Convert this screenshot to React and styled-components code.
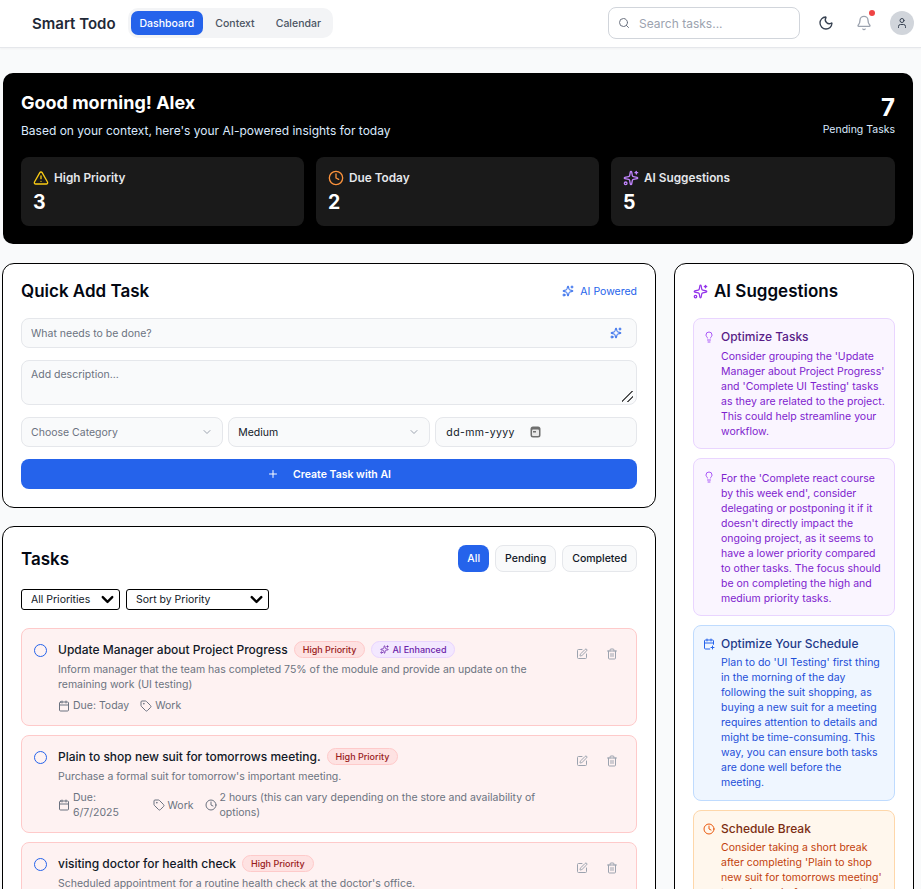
import React from 'react'
import styled, { createGlobalStyle } from 'styled-components'
import {
  Search, Moon, Bell, User, TriangleAlert, Clock, Sparkles, Plus, ChevronDown,
  Calendar, Tag, SquarePen, Trash2, Lightbulb, CalendarPlus,
} from 'lucide-react'

const GlobalStyle = createGlobalStyle`
  html, body { margin: 0; height: 100%; overflow: hidden; }
  body { background: #f9fafb; font-family: Inter, "Liberation Sans", sans-serif; color: #111827; }
  * { box-sizing: border-box; }
`

const Page = styled.div`
  height: 100vh;
  overflow: hidden;
`

const Header = styled.header`
  height: 48px;
  background: #fff;
  border-bottom: 1px solid #e5e7eb;
  box-shadow: 0 1px 2px rgba(0, 0, 0, 0.04);
  display: flex;
  align-items: center;
  padding: 0 7px 1px 32px;
`

const Logo = styled.div`
  font-size: 15px;
  font-weight: 600;
  color: #1f2937;
  margin-right: 12px;
`

const Tabs = styled.nav`
  display: flex;
  gap: 3px;
  padding: 3px;
  background: #f3f4f6;
  border-radius: 10px;
`

const Tab = styled.div`
  padding: 0 9px;
  height: 24px;
  line-height: 25px;
  font-size: 10.5px;
  font-weight: 500;
  border-radius: 7px;
  color: ${p => (p.$active ? '#fff' : '#4b5563')};
  background: ${p => (p.$active ? '#2563eb' : 'transparent')};
`

const HeaderRight = styled.div`
  margin-left: auto;
  display: flex;
  align-items: center;
`

const SearchBox = styled.div`
  width: 192px;
  height: 32px;
  display: flex;
  align-items: center;
  gap: 9px;
  padding: 0 9px;
  border: 1px solid #d1d5db;
  border-radius: 8px;
  color: #6b7280;
  margin-right: 18px;
`

const SearchInput = styled.input`
  flex: 1;
  min-width: 0;
  padding: 0;
  border: 0;
  outline: 0;
  background: transparent;
  font: 400 12px Inter, sans-serif;
  &::placeholder { color: #9ca3af; }
`

const IconButton = styled.div`
  position: relative;
  width: 16px;
  height: 16px;
  display: flex;
  color: ${p => p.$color};
  margin-right: ${p => p.$gap}px;
`

const Dot = styled.span`
  position: absolute;
  top: -5px;
  right: -3px;
  width: 6px;
  height: 6px;
  border-radius: 50%;
  background: #ef4444;
`

const Avatar = styled.div`
  width: 24px;
  height: 24px;
  border-radius: 50%;
  background: #d1d5db;
  color: #374151;
  display: flex;
  align-items: center;
  justify-content: center;
`

const Main = styled.main`
  padding: 25px 7px 0 2px;
`

const Hero = styled.section`
  margin: 0 1px 19px;
  padding: 18px;
  height: 171px;
  background: #000;
  color: #fff;
  border-radius: 10px;
`

const HeroTop = styled.div`
  display: flex;
  justify-content: space-between;
  height: 66px;
`

const HeroTitle = styled.h1`
  margin: 0 0 7px;
  font-size: 18px;
  line-height: 24px;
  font-weight: 700;
`

const HeroSub = styled.p`
  margin: 0;
  font-size: 12px;
  line-height: 18px;
  color: #dbeafe;
`

const HeroCount = styled.div`
  text-align: right;
  padding-top: 3px;
`

const CountValue = styled.div`
  font-size: 24px;
  line-height: 28px;
  font-weight: 700;
`

const CountLabel = styled.div`
  font-size: 10.5px;
  line-height: 16px;
  color: #dbeafe;
`

const Stats = styled.div`
  display: grid;
  grid-template-columns: 283px 283px 1fr;
  gap: 12px;
`

const Stat = styled.div`
  height: 69px;
  padding: 12px;
  background: #1a1a1a;
  border-radius: 8px;
`

const StatHead = styled.div`
  display: flex;
  align-items: center;
  gap: 5px;
  font-size: 11.8px;
  line-height: 18px;
  font-weight: 600;
  color: #e5e7eb;
  svg { color: ${p => p.$color}; }
`

const StatValue = styled.div`
  margin-top: 2px;
  font-size: 19.5px;
  line-height: 26px;
  font-weight: 700;
`

const Columns = styled.div`
  display: grid;
  grid-template-columns: 654px 240px;
  column-gap: 18px;
  align-items: start;
`

const LeftColumn = styled.div`
  display: flex;
  flex-direction: column;
  gap: 18px;
`

const Card = styled.section`
  background: #fff;
  border: 1px solid #000;
  border-radius: 12px;
  padding: 18px;
`

const CardHead = styled.div`
  display: flex;
  align-items: center;
  justify-content: space-between;
  margin-bottom: ${p => p.$gap}px;
`

const CardTitle = styled.h2`
  margin: 0;
  display: flex;
  align-items: center;
  gap: 6px;
  font-size: 17px;
  line-height: 18px;
  font-weight: 600;
  color: #030712;
  svg { color: #9333ea; }
`

const AiPowered = styled.div`
  display: flex;
  align-items: center;
  gap: 6px;
  font-size: 10.5px;
  color: #2563eb;
`

const Form = styled.div`
  display: flex;
  flex-direction: column;
  gap: 12px;
`

const Field = styled.div`
  height: 30px;
  display: flex;
  align-items: center;
  justify-content: space-between;
  padding: 0 ${p => p.$right || 9}px 0 9px;
  background: #f9fafb;
  border: 1px solid #e5e7eb;
  border-radius: 8px;
  font-size: 10.5px;
  color: ${p => p.$color || '#111827'};
`

const TitleInput = styled.input`
  flex: 1;
  padding: 0;
  border: 0;
  outline: 0;
  background: transparent;
  font: 400 10.5px Inter, sans-serif;
  &::placeholder { color: #6b7280; }
`

const DescInput = styled.textarea`
  display: block;
  width: 100%;
  height: 45px;
  padding: 6px 9px;
  background: #f9fafb;
  border: 1px solid #e5e7eb;
  border-radius: 8px;
  outline: 0;
  font: 400 10.5px/15px Inter, sans-serif;
  &::placeholder { color: #6b7280; }
  &::-webkit-resizer {
    background: linear-gradient(
      135deg,
      transparent 44%, #555 44%, #555 53%, transparent 53%,
      transparent 72%, #555 72%, #555 81%, transparent 81%
    ) 1px 2px / 11px 11px no-repeat;
  }
`

const FieldRow = styled.div`
  display: grid;
  grid-template-columns: repeat(3, 1fr);
  gap: 5.5px;
`

const DateField = styled(Field)`
  justify-content: flex-start;
  gap: 15px;
  padding-left: 10px;
  letter-spacing: 0.4px;
`

const CreateButton = styled.button`
  height: 30px;
  display: flex;
  align-items: center;
  justify-content: center;
  gap: 14px;
  background: #2563eb;
  border: 0;
  border-radius: 8px;
  color: #fff;
  font: 600 10.5px Inter, sans-serif;
`

const FilterButtons = styled.div`
  display: flex;
  gap: 6px;
`

const FilterButton = styled.button`
  height: 27px;
  padding: 0 9px;
  border-radius: 8px;
  font: 500 10.5px Inter, sans-serif;
  border: ${p => (p.$active ? '0' : '1px solid #e5e7eb')};
  background: ${p => (p.$active ? '#2563eb' : '#f9fafb')};
  color: ${p => (p.$active ? '#fff' : '#111827')};
`

const Selects = styled.div`
  display: flex;
  gap: 6px;
  margin-bottom: 18px;
`

const SelectWrap = styled.div`
  position: relative;
  height: 21px;
  svg {
    position: absolute;
    top: 1px;
    right: 3px;
    pointer-events: none;
  }
`

const FilterSelect = styled.select`
  appearance: none;
  display: block;
  width: ${p => p.$width}px;
  height: 21px;
  padding: 0 0 0 9px;
  background: #fff;
  border: 1px solid #000;
  border-radius: 3px;
  font: 400 10.5px Inter, sans-serif;
  color: #111827;
`

const TaskList = styled.div`
  display: flex;
  flex-direction: column;
  gap: 9px;
`

const Task = styled.article`
  display: flex;
  gap: 11px;
  padding: 12px;
  background: #fef2f2;
  border: 1px solid #fecaca;
  border-radius: 8px;
`

const Circle = styled.span`
  flex: none;
  width: 13px;
  height: 13px;
  margin-top: 3px;
  border: 1.5px solid #2563eb;
  border-radius: 50%;
`

const TaskBody = styled.div`
  flex: 1;
  min-width: 0;
`

const TaskHead = styled.div`
  display: flex;
  align-items: flex-start;
  gap: 6px;
  height: 18px;
  margin-bottom: 3px;
`

const TaskTitle = styled.div`
  font-size: 12px;
  line-height: 18px;
  font-weight: 500;
  color: #111827;
`

const Badge = styled.span`
  display: inline-flex;
  align-items: center;
  gap: 3px;
  height: 17px;
  padding: 0 8px;
  border-radius: 9px;
  font-size: 9px;
  font-weight: 500;
  white-space: nowrap;
  color: ${p => (p.$kind === 'ai' ? '#6b21a8' : '#991b1b')};
  background: ${p => (p.$kind === 'ai' ? '#f3e8ff' : '#fee2e2')};
  border: 1px solid ${p => (p.$kind === 'ai' ? '#e9d5ff' : '#fecaca')};
`

const TaskDesc = styled.p`
  margin: 0 0 6px;
  font-size: 10.5px;
  line-height: 15px;
  color: #6b7280;
`

const Meta = styled.div`
  display: flex;
  align-items: center;
  gap: 11px;
`

const MetaItem = styled.span`
  display: flex;
  align-items: center;
  gap: 3px;
  font-size: 10.5px;
  line-height: 15px;
  color: #6b7280;
  svg { flex: none; }
`

const Actions = styled.div`
  flex: none;
  display: flex;
  gap: 18px;
  padding: 7px 6px 0 0;
  color: #9ca3af;
`

const SuggestionList = styled.div`
  display: flex;
  flex-direction: column;
  gap: 9px;
`

const tones = {
  purple: { bg: '#faf5ff', border: '#e9d5ff', title: '#581c87', text: '#7e22ce', icon: '#a855f7' },
  blue: { bg: '#eff6ff', border: '#bfdbfe', title: '#1e3a8a', text: '#1d4ed8', icon: '#2563eb' },
  orange: { bg: '#fff7ed', border: '#fed7aa', title: '#7c2d12', text: '#c2410c', icon: '#ea580c' },
}

const Suggestion = styled.div`
  display: flex;
  gap: 6px;
  padding: 10px 8px 9.3px 9px;
  background: ${p => tones[p.$tone].bg};
  border: 1px solid ${p => tones[p.$tone].border};
  border-radius: 8px;
  svg { flex: none; color: ${p => tones[p.$tone].icon}; margin-top: 2px; }
`

const SuggestionTitle = styled.div`
  font-size: 12px;
  line-height: 15px;
  font-weight: 500;
  margin-bottom: 4.5px;
  color: ${p => tones[p.$tone].title};
`

const SuggestionText = styled.div`
  margin-top: 1.8px;
  font-size: 10.5px;
  line-height: 15px;
  color: ${p => tones[p.$tone].text};
`

// the browser's own date picker glyph: a filled rounded calendar
const DateGlyph = () => (
  <svg width="11" height="12" viewBox="0 0 11 12">
    <rect x="0.5" y="0.5" width="10" height="11" rx="2.5" fill="#6f6f6f" />
    <rect x="2" y="3.5" width="7" height="6.5" rx="1" fill="#e8e8e8" />
    <rect x="3" y="5" width="3" height="1.5" fill="#6f6f6f" />
  </svg>
)

const stats = [
  { label: 'High Priority', value: 3, color: '#facc15', Icon: TriangleAlert },
  { label: 'Due Today', value: 2, color: '#fb923c', Icon: Clock },
  { label: 'AI Suggestions', value: 5, color: '#c084fc', Icon: Sparkles },
]

const tasks = [
  {
    title: 'Update Manager about Project Progress',
    desc: 'Inform manager that the team has completed 75% of the module and provide an update on the remaining work (UI testing)',
    ai: true,
    due: 'Due: Today',
    category: 'Work',
  },
  {
    title: 'Plain to shop new suit for tomorrows meeting.',
    desc: "Purchase a formal suit for tomorrow's important meeting.",
    due: 'Due: 6/7/2025',
    category: 'Work',
    time: '2 hours (this can vary depending on the store and availability of options)',
  },
  {
    title: 'visiting doctor for health check',
    desc: "Scheduled appointment for a routine health check at the doctor's office.",
    due: 'Due: Today',
    category: 'Health',
  },
]

const suggestions = [
  {
    tone: 'purple',
    Icon: Lightbulb,
    title: 'Optimize Tasks',
    text: "Consider grouping the 'Update Manager about Project Progress' and 'Complete UI Testing' tasks as they are related to the project. This could help streamline your workflow.",
  },
  {
    tone: 'purple',
    Icon: Lightbulb,
    text: "For the 'Complete react course by this week end', consider delegating or postponing it if it doesn't directly impact the ongoing project, as it seems to have a lower priority compared to other tasks. The focus should be on completing the high and medium priority tasks.",
  },
  {
    tone: 'blue',
    Icon: CalendarPlus,
    title: 'Optimize Your Schedule',
    text: "Plan to do 'UI Testing' first thing in the morning of the day following the suit shopping, as buying a new suit for a meeting requires attention to details and might be time-consuming. This way, you can ensure both tasks are done well before the meeting.",
  },
  {
    tone: 'orange',
    Icon: Clock,
    title: 'Schedule Break',
    text: "Consider taking a short break after completing 'Plain to shop new suit for tomorrows meeting' to recharge before your next task.",
  },
]

export default function App() {
  return (
    <Page>
      <GlobalStyle />
      <Header>
        <Logo>Smart Todo</Logo>
        <Tabs>
          <Tab $active>Dashboard</Tab>
          <Tab>Context</Tab>
          <Tab>Calendar</Tab>
        </Tabs>
        <HeaderRight>
          <SearchBox>
            <Search size={12} />
            <SearchInput placeholder="Search tasks..." />
          </SearchBox>
          <IconButton $color="#374151" $gap={22}><Moon size={16} /></IconButton>
          <IconButton $color="#9ca3af" $gap={18}><Bell size={16} /><Dot /></IconButton>
          <Avatar><User size={12} /></Avatar>
        </HeaderRight>
      </Header>
      <Main>
        <Hero>
          <HeroTop>
            <div>
              <HeroTitle>Good morning! Alex</HeroTitle>
              <HeroSub>Based on your context, here's your AI-powered insights for today</HeroSub>
            </div>
            <HeroCount>
              <CountValue>7</CountValue>
              <CountLabel>Pending Tasks</CountLabel>
            </HeroCount>
          </HeroTop>
          <Stats>
            {stats.map(({ label, value, color, Icon }) => (
              <Stat key={label}>
                <StatHead $color={color}><Icon size={16} />{label}</StatHead>
                <StatValue>{value}</StatValue>
              </Stat>
            ))}
          </Stats>
        </Hero>
        <Columns>
          <LeftColumn>
            <Card>
              <CardHead $gap={18}>
                <CardTitle>Quick Add Task</CardTitle>
                <AiPowered><Sparkles size={12} />AI Powered</AiPowered>
              </CardHead>
              <Form>
                <Field $right={14}>
                  <TitleInput placeholder="What needs to be done?" />
                  <Sparkles size={12} color="#2563eb" />
                </Field>
                <DescInput placeholder="Add description..." />
                <FieldRow>
                  <Field $color="#6b7280">Choose Category<ChevronDown size={12} color="#9ca3af" /></Field>
                  <Field>Medium<ChevronDown size={12} color="#9ca3af" /></Field>
                  <DateField>dd-mm-yyyy<DateGlyph /></DateField>
                </FieldRow>
                <CreateButton><Plus size={12} />Create Task with AI</CreateButton>
              </Form>
            </Card>
            <Card>
              <CardHead $gap={17}>
                <CardTitle>Tasks</CardTitle>
                <FilterButtons>
                  <FilterButton $active>All</FilterButton>
                  <FilterButton>Pending</FilterButton>
                  <FilterButton>Completed</FilterButton>
                </FilterButtons>
              </CardHead>
              <Selects>
                <SelectWrap>
                  <FilterSelect $width={99}><option>All Priorities</option></FilterSelect>
                  <ChevronDown size={19} strokeWidth={3} color="#000" />
                </SelectWrap>
                <SelectWrap>
                  <FilterSelect $width={143}><option>Sort by Priority</option></FilterSelect>
                  <ChevronDown size={19} strokeWidth={3} color="#000" />
                </SelectWrap>
              </Selects>
              <TaskList>
                {tasks.map(t => (
                  <Task key={t.title}>
                    <Circle />
                    <TaskBody>
                      <TaskHead>
                        <TaskTitle>{t.title}</TaskTitle>
                        <Badge>High Priority</Badge>
                        {t.ai && <Badge $kind="ai"><Sparkles size={9} />AI Enhanced</Badge>}
                      </TaskHead>
                      <TaskDesc>{t.desc}</TaskDesc>
                      <Meta>
                        <MetaItem><Calendar size={12} />{t.due}</MetaItem>
                        <MetaItem><Tag size={12} />{t.category}</MetaItem>
                        {t.time && <MetaItem><Clock size={12} />{t.time}</MetaItem>}
                      </Meta>
                    </TaskBody>
                    <Actions>
                      <SquarePen size={12} />
                      <Trash2 size={12} />
                    </Actions>
                  </Task>
                ))}
              </TaskList>
            </Card>
          </LeftColumn>
          <Card>
            <CardHead $gap={18}>
              <CardTitle><Sparkles size={15} />AI Suggestions</CardTitle>
            </CardHead>
            <SuggestionList>
              {suggestions.map(({ tone, Icon, title, text }) => (
                <Suggestion key={text} $tone={tone}>
                  <Icon size={12} />
                  <div>
                    {title && <SuggestionTitle $tone={tone}>{title}</SuggestionTitle>}
                    <SuggestionText $tone={tone}>{text}</SuggestionText>
                  </div>
                </Suggestion>
              ))}
            </SuggestionList>
          </Card>
        </Columns>
      </Main>
    </Page>
  )
}
